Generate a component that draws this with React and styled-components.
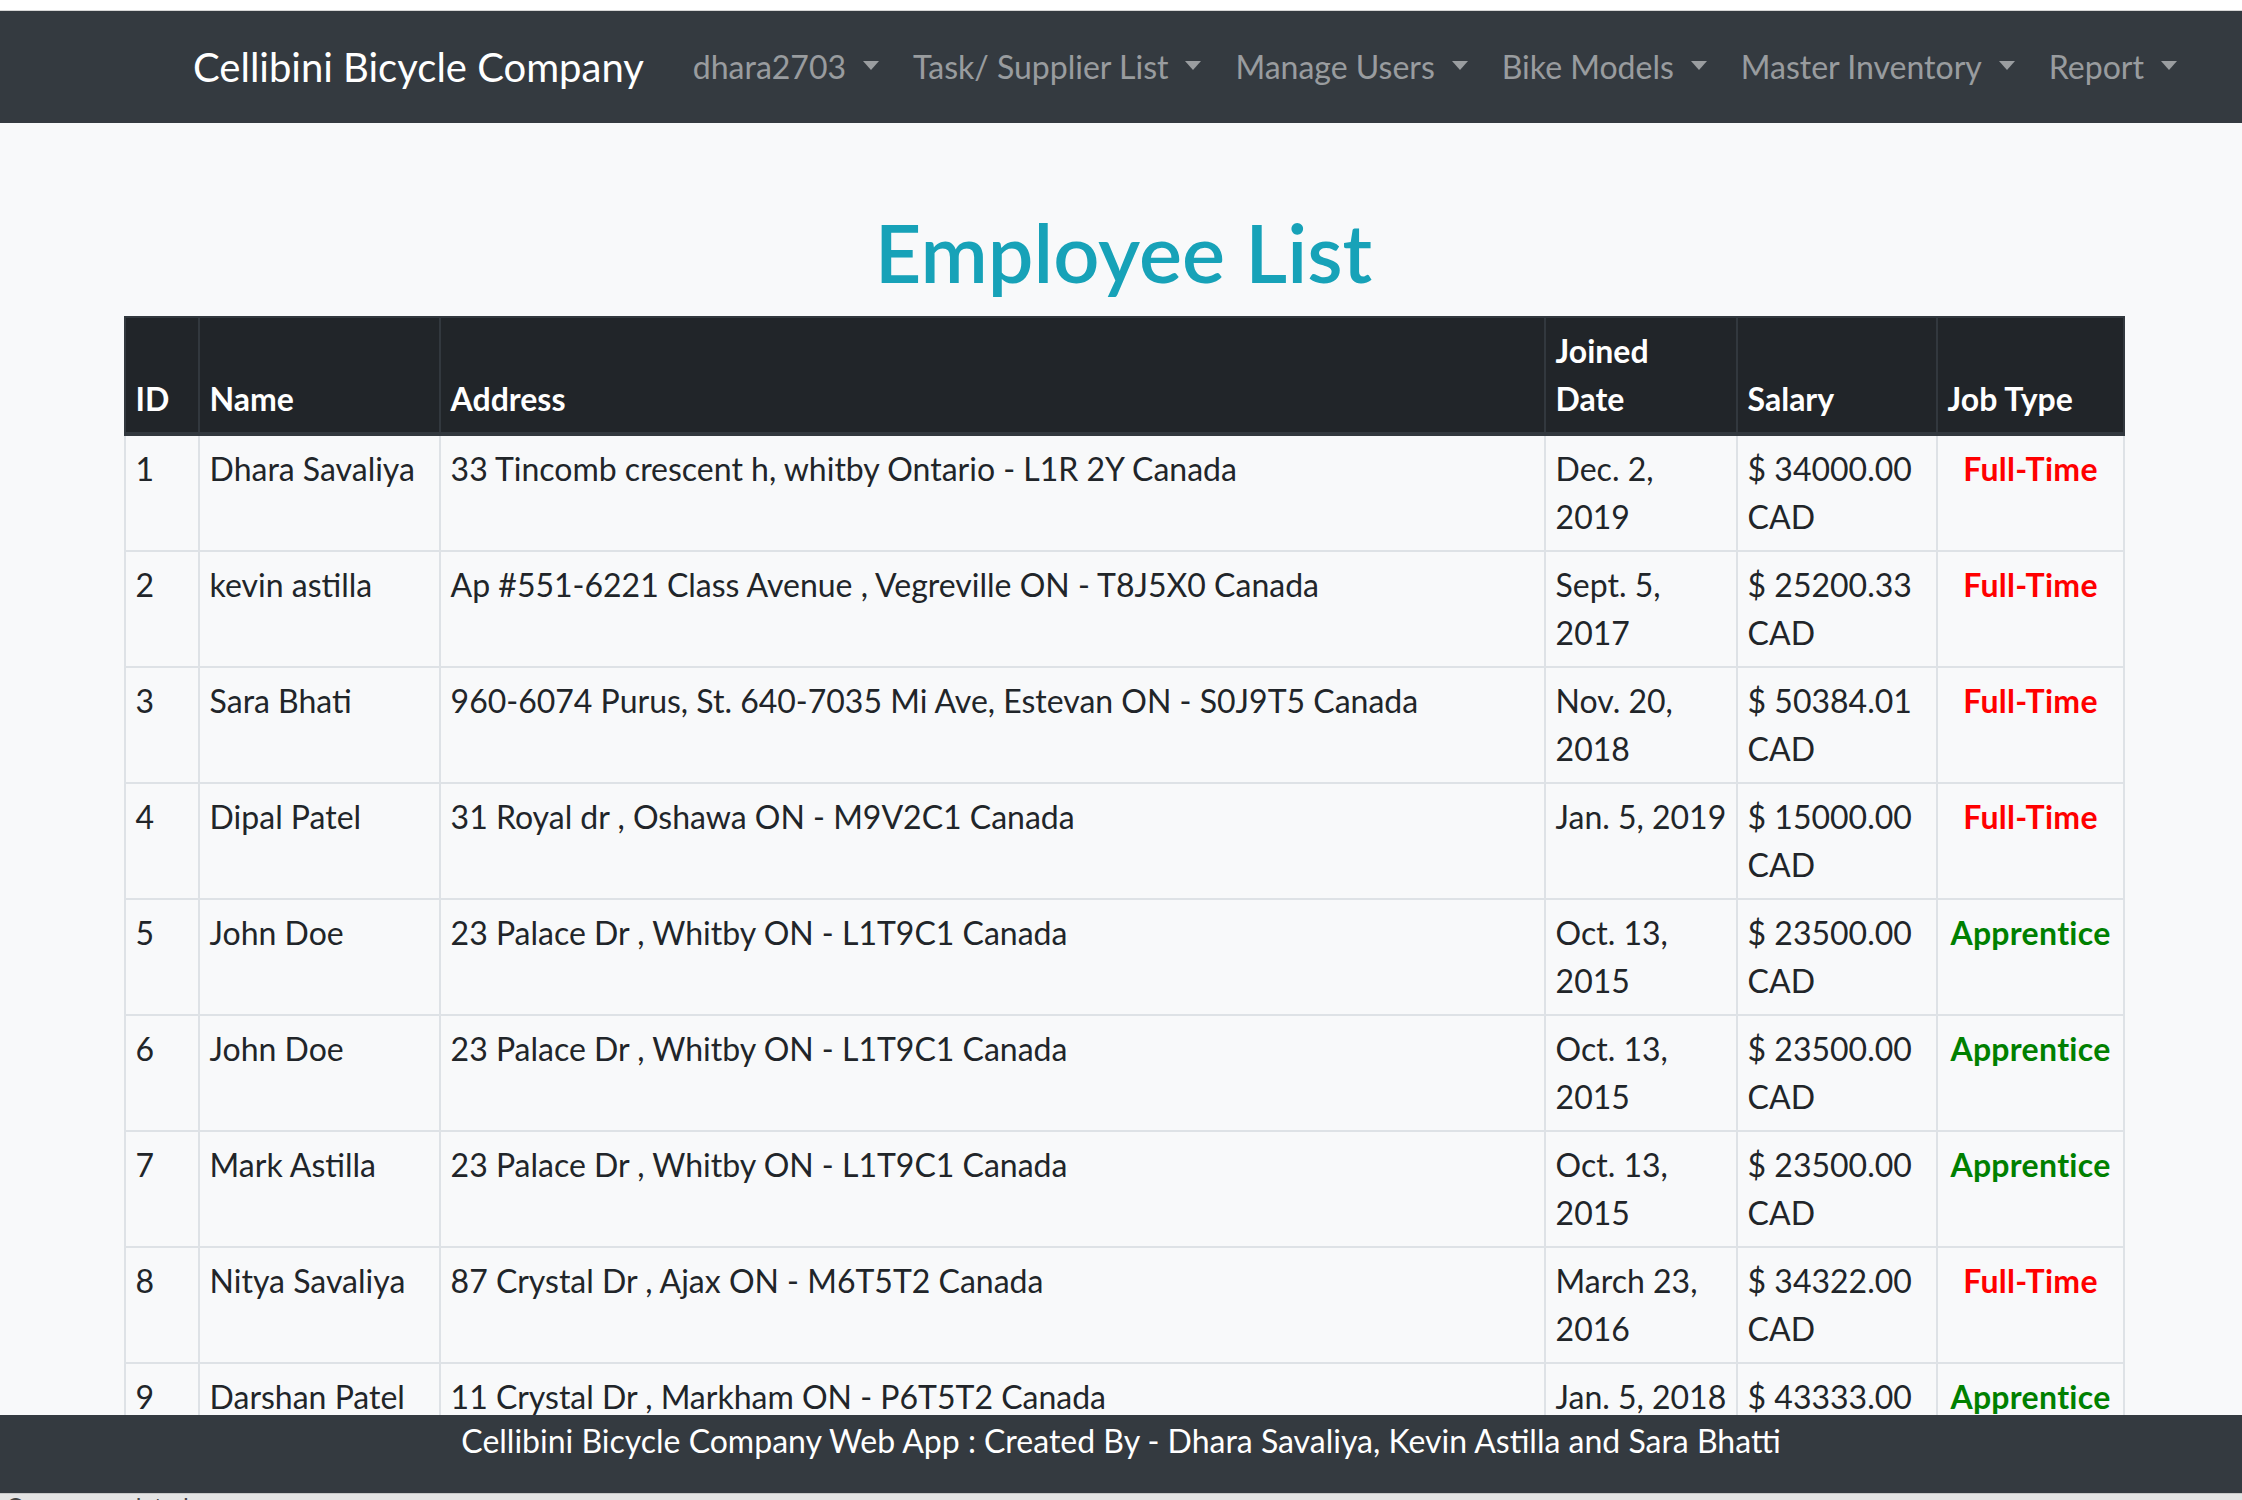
import React from 'react'
import styled, {createGlobalStyle} from 'styled-components'

const GlobalStyle = createGlobalStyle`
  html, body {
    margin: 0;
    padding: 0;
  }
  body {
    background: #f8f9fa;
    font-family: Lato, "Noto Sans", sans-serif;
    font-size: 32px;
    line-height: 1.5;
    color: #212529;
  }
`

const BrowserEdge = styled.div`
  height: 10px;
  background: #fff;
  border-bottom: 1px solid #d6d6d6;
`

const NavBar = styled.nav`
  display: flex;
  align-items: center;
  height: 112px;
  padding: 0 32px 0 193px;
  background: #343a40;
`

const Brand = styled.a`
  font-size: 40px;
  color: #fff;
  margin-right: 32px;
  white-space: nowrap;
  text-decoration: none;
`

const NavList = styled.ul`
  display: flex;
  list-style: none;
  margin: 0;
  padding: 0;
`

const NavItem = styled.li`
  padding: 0 17px;
  color: rgba(255, 255, 255, 0.5);
  white-space: nowrap;

  &::after {
    content: '';
    display: inline-block;
    margin-left: 17px;
    vertical-align: 9px;
    border-top: 9px solid;
    border-left: 8.5px solid transparent;
    border-right: 8.5px solid transparent;
  }
`

const Main = styled.main`
  padding: 80px 119px 120px 124px;
`

const Title = styled.h1`
  margin: 0 0 16px;
  text-align: center;
  font-size: 81px;
  line-height: 1.2;
  font-weight: 600;
  color: #17a2b8;
`

const Table = styled.table`
  width: 1999px;
  table-layout: fixed;
  border-collapse: collapse;
`

const Th = styled.th`
  padding: 9px 9.6px;
  text-align: left;
  vertical-align: bottom;
  font-weight: 700;
  color: #fff;
  background: #212529;
  border: 2px solid #32383e;
  border-bottom-width: 4px;
`

const HeadLabel = styled.span`
  display: inline-block;
  width: ${(props) => (props.$stack ? 'min-content' : 'auto')};
`

const Td = styled.td`
  padding: 9px 9.6px;
  vertical-align: top;
  border: 2px solid #dee2e6;
  text-align: ${(props) => (props.$center ? 'center' : 'left')};
`

const JobType = styled.span`
  font-weight: 700;
  letter-spacing: 0.3px;
  color: ${(props) => (props.$kind === 'Full-Time' ? '#ff0000' : '#008000')};
`

const Footer = styled.footer`
  position: fixed;
  left: 0;
  right: 0;
  bottom: 6px;
  height: 79px;
  padding-top: 2px;
  box-sizing: border-box;
  background: #343a40;
  color: #fff;
  text-align: center;
`

const StatusStrip = styled.div`
  position: fixed;
  left: 0;
  right: 0;
  bottom: 0;
  height: 6px;
  overflow: hidden;
  background: #e4e4e4;
  border-top: 1px solid #c8c8c8;
  font-size: 24px;
  line-height: 1;
  color: #444;
  padding-left: 6px;
`

const navItems = ['dhara2703', 'Task/ Supplier List', 'Manage Users', 'Bike Models', 'Master Inventory', 'Report']

const columns = [
  {label: 'ID', width: 74},
  {label: 'Name', width: 241},
  {label: 'Address', width: 1105},
  {label: 'Joined Date', width: 192, stack: true},
  {label: 'Salary', width: 200},
  {label: 'Job Type', width: 187},
]

const palace = '23 Palace Dr , Whitby ON - L1T9C1 Canada'

const employees = [
  [1, 'Dhara Savaliya', '33 Tincomb crescent h, whitby Ontario - L1R 2Y Canada', 'Dec. 2, 2019', '34000.00', 'Full-Time'],
  [2, 'kevin astilla', 'Ap #551-6221 Class Avenue , Vegreville ON - T8J5X0 Canada', 'Sept. 5, 2017', '25200.33', 'Full-Time'],
  [3, 'Sara Bhati', '960-6074 Purus, St. 640-7035 Mi Ave, Estevan ON - S0J9T5 Canada', 'Nov. 20, 2018', '50384.01', 'Full-Time'],
  [4, 'Dipal Patel', '31 Royal dr , Oshawa ON - M9V2C1 Canada', 'Jan. 5, 2019', '15000.00', 'Full-Time'],
  [5, 'John Doe', palace, 'Oct. 13, 2015', '23500.00', 'Apprentice'],
  [6, 'John Doe', palace, 'Oct. 13, 2015', '23500.00', 'Apprentice'],
  [7, 'Mark Astilla', palace, 'Oct. 13, 2015', '23500.00', 'Apprentice'],
  [8, 'Nitya Savaliya', '87 Crystal Dr , Ajax ON - M6T5T2 Canada', 'March 23, 2016', '34322.00', 'Full-Time'],
  [9, 'Darshan Patel', '11 Crystal Dr , Markham ON - P6T5T2 Canada', 'Jan. 5, 2018', '43333.00', 'Apprentice'],
]

const App = () => {
  return (
    <>
      <GlobalStyle />
      <BrowserEdge />
      <NavBar>
        <Brand href='#'>Cellibini Bicycle Company</Brand>
        <NavList>
          {navItems.map((item) => (
            <NavItem key={item}>{item}</NavItem>
          ))}
        </NavList>
      </NavBar>
      <Main>
        <Title>Employee List</Title>
        <Table>
          <colgroup>
            {columns.map((col) => (
              <col key={col.label} style={{width: col.width}} />
            ))}
          </colgroup>
          <thead>
            <tr>
              {columns.map((col) => (
                <Th key={col.label}>
                  <HeadLabel $stack={col.stack}>{col.label}</HeadLabel>
                </Th>
              ))}
            </tr>
          </thead>
          <tbody>
            {employees.map(([id, name, address, joined, salary, job]) => (
              <tr key={id}>
                <Td>{id}</Td>
                <Td>{name}</Td>
                <Td>{address}</Td>
                <Td>{joined}</Td>
                <Td>$ {salary} CAD</Td>
                <Td $center>
                  <JobType $kind={job}>{job}</JobType>
                </Td>
              </tr>
            ))}
          </tbody>
        </Table>
      </Main>
      <Footer>Cellibini Bicycle Company Web App : Created By - Dhara Savaliya, Kevin Astilla and Sara Bhatti</Footer>
      <StatusStrip>Query completed</StatusStrip>
    </>
  )
}

export default App
